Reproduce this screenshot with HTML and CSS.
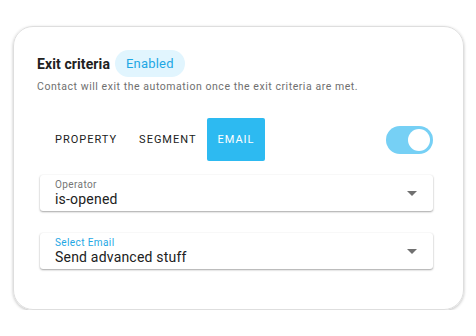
FILE: index.html
```html
<!DOCTYPE html>
<html>
<head>
<meta charset="utf-8">
<link rel="stylesheet" href="styles.css">
</head>
<body>
<div class="card">
  <div class="title-row">
    <span class="title">Exit criteria</span>
    <span class="badge">Enabled</span>
  </div>
  <p class="subtitle">Contact will exit the automation once the exit criteria are met.</p>
  <div class="form">
    <div class="tabs-row">
      <div class="tabs">
        <button class="tab">PROPERTY</button>
        <button class="tab">SEGMENT</button>
        <button class="tab active">EMAIL</button>
      </div>
      <div class="toggle"><span class="thumb"></span></div>
    </div>
    <div class="select">
      <div class="select-text">
        <span class="label">Operator</span>
        <span class="value">is-opened</span>
      </div>
      <span class="arrow"></span>
    </div>
    <div class="select">
      <div class="select-text">
        <span class="label blue">Select Email</span>
        <span class="value">Send advanced stuff</span>
      </div>
      <span class="arrow"></span>
    </div>
  </div>
</div>
</body>
</html>
```
FILE: styles.css
```css
* { box-sizing: border-box; }
body {
  margin: 0;
  background: #fff;
  font-family: Roboto, "Noto Sans", sans-serif;
  color: #212121;
}
.card {
  margin: 26px 12px 0 13px;
  width: 451px;
  height: 284px;
  border: 1px solid #dedede;
  border-radius: 20px;
  box-shadow: 0 1px 3px rgba(0,0,0,0.25);
  padding: 23px 30px 0 23px;
}
.title-row {
  display: flex;
  align-items: center;
  gap: 5px;
  height: 27px;
}
.title {
  font-size: 14px;
  font-weight: 700;
  color: #212121;
  letter-spacing: 0.1px;
}
.badge {
  background: #e1f5fe;
  color: #1ea7e4;
  font-size: 13px;
  height: 27px;
  line-height: 27px;
  padding: 0 11px;
  border-radius: 14px;
  letter-spacing: 0.2px;
}
.subtitle {
  margin: 3px 0 0;
  font-size: 10.5px;
  line-height: 14px;
  letter-spacing: 0.55px;
  color: #6f6f6f;
}
.form {
  margin-left: 3px;
}
.tabs-row {
  display: flex;
  align-items: center;
  justify-content: space-between;
  margin-top: 24px;
  padding-left: 4px;
}
.tabs {
  display: flex;
}
.tab {
  border: none;
  background: transparent;
  font-family: Roboto, sans-serif;
  font-size: 11px;
  letter-spacing: 1px;
  color: #212121;
  height: 43px;
  padding: 0 11px 0 11px;
  border-radius: 2px;
}
.tab.active {
  background: #2dbaf1;
  color: #fff;
  padding: 0 10px 0 10px;
}
.toggle {
  width: 47px;
  height: 28px;
  border-radius: 14px;
  background: #76d0f5;
  display: flex;
  align-items: center;
  justify-content: flex-end;
  padding-right: 3px;
}
.thumb {
  width: 22px;
  height: 22px;
  border-radius: 50%;
  background: #fff;
}
.select {
  display: flex;
  align-items: center;
  justify-content: space-between;
  height: 36px;
  margin-top: 14px;
  padding: 0 16px 0 15px;
  background: #fff;
  border-radius: 3px;
  box-shadow: 0 1px 2px rgba(0,0,0,0.35), 0 0 2px rgba(0,0,0,0.06);
}
.select + .select { margin-top: 22px; }
.select-text {
  display: flex;
  flex-direction: column;
}
.label {
  font-size: 10px;
  line-height: 12px;
  color: #757575;
  letter-spacing: 0.4px;
}
.label.blue { color: #1ea7e4; }
.value {
  font-size: 14px;
  line-height: 17px;
  color: #212121;
  letter-spacing: 0.2px;
}
.arrow {
  width: 0;
  height: 0;
  border-left: 5px solid transparent;
  border-right: 5px solid transparent;
  border-top: 5px solid #707070;
}
```
